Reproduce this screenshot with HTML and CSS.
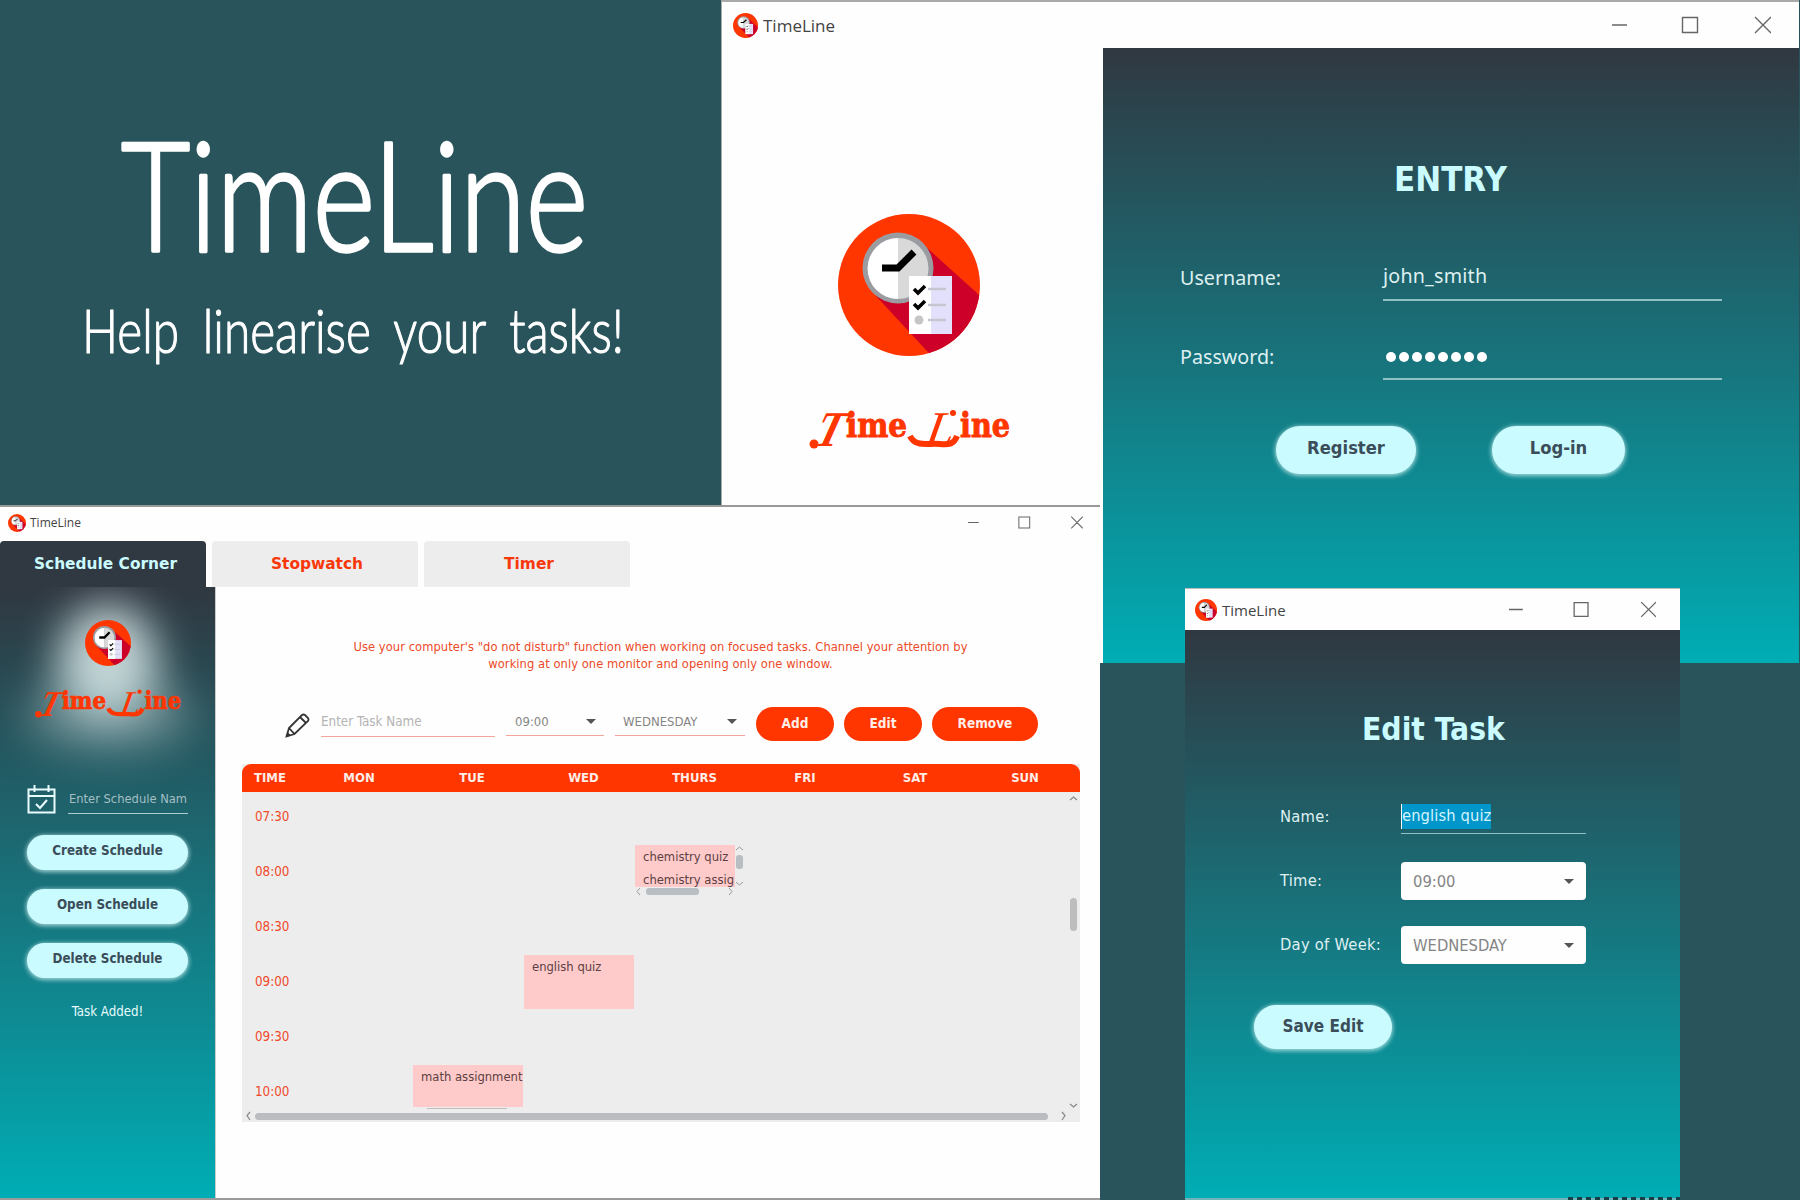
FILE: index.html
```html
<!DOCTYPE html>
<html lang="en">
<head>
<meta charset="utf-8">
<title>TimeLine</title>
<link rel="stylesheet" href="styles.css">
</head>
<body>
<svg class="defs" width="0" height="0" aria-hidden="true">
  <defs>
    <clipPath id="disc"><circle cx="71" cy="71" r="71"/></clipPath>
    <symbol id="logo" viewBox="0 0 142 142">
      <circle cx="71" cy="71" r="71" fill="#ff3600"/>
      <path clip-path="url(#disc)" d="M88 33 L150 89 V150 H101 L38 82 Z" fill="#cc0028"/>
      <circle cx="60" cy="54" r="35.500" fill="#9b9ca2"/>
      <path d="M60 24a30.500 30.500 0 0 0 0 61z" fill="#fff"/>
      <path d="M60 24a30.500 30.500 0 0 1 0 61z" fill="#d9d9da"/>
      <path d="M44 54H60L76 38" fill="none" stroke="#000" stroke-width="7"/>
      <path d="M71 62h43v58H71z" fill="#e2e0fa"/>
      <path d="M71 62h22v58H71z" fill="#fff"/>
      <path d="M76 75l4 4 7-7M76 90l4 4 7-7" fill="none" stroke="#000" stroke-width="3.500"/>
      <path d="M90 75h18M90 91h18M90 106h18" stroke="#c6c6d0" stroke-width="2.500"/>
      <circle cx="81" cy="106" r="4.500" fill="#c6c6c6"/>
    </symbol>
    <symbol id="controls" viewBox="0 0 160 18">
      <path d="M1 9H16M71.500 1.500H86.500V16.500H71.500zM144 1L160 17M160 1L144 17" fill="none" stroke="#666" stroke-width="1.400"/>
    </symbol>
    <symbol id="wordmark" viewBox="0 0 204 44">
      <g class="mark">
        <text class="swash-t" transform="translate(4 38) skewX(-24)" textLength="27" lengthAdjust="spacingAndGlyphs">T</text>
        <text class="lower" x="39" y="29" textLength="61" lengthAdjust="spacingAndGlyphs">ime</text>
        <text class="swash-l" transform="translate(117 38) skewX(-10)">L</text>
        <text class="lower" x="153" y="29" textLength="50" lengthAdjust="spacingAndGlyphs">ine</text>
        <path d="M103 28c5 11 17 7 30 8 9 1 14 0 17-8" fill="none" stroke="#ff3600" stroke-width="6"/>
        <circle cx="7" cy="36" r="4.500" fill="#ff3600"/>
        <circle cx="146" cy="5" r="3" fill="#ff3600"/>
      </g>
    </symbol>
  </defs>
</svg>

<header class="hero">
  <svg class="hero-title" viewBox="0 0 480 200"><text x="4" y="144" textLength="467" lengthAdjust="spacingAndGlyphs">TimeLine</text></svg>
  <svg class="hero-sub" viewBox="0 0 560 100"><text x="0" y="63" textLength="542" lengthAdjust="spacingAndGlyphs">Help linearise your tasks!</text></svg>
</header>

<section class="window entry">
  <div class="titlebar">
    <svg class="app-icon"><use href="#logo"/></svg><span class="app-name">TimeLine</span>
    <svg class="controls"><use href="#controls"/></svg>
  </div>
  <div class="entry-body">
    <div class="brand">
      <svg class="brand-logo"><use href="#logo"/></svg>
      <svg class="brand-word"><use href="#wordmark"/></svg>
    </div>
    <form class="entry-form">
      <h2>ENTRY</h2>
      <div class="field"><label>Username:</label><div class="line-input">john_smith</div></div>
      <div class="field"><label>Password:</label><div class="line-input dots"><i></i><i></i><i></i><i></i><i></i><i></i><i></i><i></i></div></div>
      <div class="entry-actions"><span class="pill">Register</span><span class="pill">Log-in</span></div>
    </form>
  </div>
</section>

<section class="window main">
  <div class="titlebar">
    <svg class="app-icon"><use href="#logo"/></svg><span class="app-name">TimeLine</span>
    <svg class="controls"><use href="#controls"/></svg>
  </div>
  <nav class="tabs"><span class="tab active">Schedule Corner</span><span class="tab">Stopwatch</span><span class="tab">Timer</span></nav>
  <div class="main-body">
    <aside class="sidebar">
      <div class="glow">
        <svg class="side-logo"><use href="#logo"/></svg>
        <svg class="side-word"><use href="#wordmark"/></svg>
      </div>
      <div class="schedule-name">
        <svg class="calendar" viewBox="0 0 29 29"><path d="M1.500 4.500H27.500V27.500H1.500zM1.500 11H27.500M7.500 0V7M21.500 0V7M9 19l4 4 7-8" fill="none" stroke="#e9fdff" stroke-width="2"/></svg>
        <span class="side-input">Enter Schedule Nam</span>
      </div>
      <span class="pill">Create Schedule</span>
      <span class="pill">Open Schedule</span>
      <span class="pill">Delete Schedule</span>
      <p class="status">Task Added!</p>
    </aside>
    <div class="content">
      <p class="tip"><span>Use your computer's "do not disturb" function when working on focused tasks. Channel your attention by</span><br><span>working at only one monitor and opening only one window.</span></p>
      <div class="toolbar">
        <svg class="pencil" viewBox="0 0 25 25"><path d="M1.500 23.500L4 15 17 2Q18.500 1 20 2L23 5Q24 6.500 23 8L9.500 21ZM4 15L9.500 21M15 4L21 10" fill="none" stroke="#333" stroke-width="1.800"/><path d="M1 24l1.500-5L6 22.500z" fill="#333"/></svg>
        <span class="task-input">Enter Task Name</span>
        <span class="combo time">09:00<i class="caret"></i></span>
        <span class="combo day">WEDNESDAY<i class="caret"></i></span>
        <span class="btn">Add</span><span class="btn">Edit</span><span class="btn wide">Remove</span>
      </div>
      <div class="table">
        <div class="thead"><span class="first">TIME</span><span>MON</span><span>TUE</span><span>WED</span><span>THURS</span><span>FRI</span><span>SAT</span><span>SUN</span></div>
        <div class="tbody">
          <div class="grid">
            <span class="hour r1">07:30</span><span class="hour r2">08:00</span><span class="hour r3">08:30</span><span class="hour r4">09:00</span><span class="hour r5">09:30</span><span class="hour r6">10:00</span>
            <div class="cell thu r2">
              <div class="task list"><span>chemistry quiz</span><span>chemistry assig</span></div>
              <svg class="mini-v" viewBox="0 0 9 42"><path d="M1 5l3.500-3L8 5M1 37l3.500 3L8 37" fill="none" stroke="#999"/><rect x="1" y="10" width="7" height="14" rx="3" fill="#b8bec2"/></svg>
              <svg class="mini-h" viewBox="0 0 99 9"><path d="M5 1L2 4.500 5 8M94 1l3 3.500L94 8" fill="none" stroke="#999"/><rect x="11" y="1" width="53" height="7" rx="3" fill="#b8bec2"/></svg>
            </div>
            <div class="cell wed r4"><div class="task">english quiz</div></div>
            <div class="cell tue r6"><div class="task short">math assignment</div><i class="peek"></i></div>
          </div>
          <svg class="scroll-v" viewBox="0 0 9 317"><path d="M1 8l3.500-3L8 8M1 312l3.500 3L8 312" fill="none" stroke="#888" stroke-width="1.200"/><rect x="1" y="106" width="7" height="33" rx="3.500" fill="#bdbdbd"/></svg>
        </div>
        <svg class="scroll-h" viewBox="0 0 838 13"><path d="M8 3L5 6.500 8 11M820 3l3 3.500L820 11" fill="none" stroke="#888" stroke-width="1.200"/><rect x="13" y="4" width="793" height="7" rx="3.500" fill="#bbbcbf"/></svg>
      </div>
    </div>
  </div>
</section>

<section class="window edit">
  <div class="titlebar">
    <svg class="app-icon"><use href="#logo"/></svg><span class="app-name">TimeLine</span>
    <svg class="controls"><use href="#controls"/></svg>
  </div>
  <form class="edit-form">
    <h2>Edit Task</h2>
    <div class="field"><label>Name:</label><div class="line-input"><span class="selected">english quiz</span></div></div>
    <div class="field"><label>Time:</label><div class="select">09:00<i class="caret"></i></div></div>
    <div class="field"><label>Day of Week:</label><div class="select">WEDNESDAY<i class="caret"></i></div></div>
    <span class="pill">Save Edit</span>
    <i class="specks"></i>
  </form>
</section>
</body>
</html>
```
FILE: styles.css
```css
* { box-sizing: border-box; }
body {
  margin: 0; width: 1800px; height: 1200px; overflow: hidden; position: relative;
  background: #29545c;
  font-family: "DejaVu Sans Condensed", "DejaVu Sans", sans-serif;
  font-stretch: condensed;
}
.defs { position: absolute; }
svg { display: block; flex: none; }
h2, p, form { margin: 0; }
span { white-space: nowrap; }

.hero { width: 720px; height: 506px; padding-top: 107px; }
.hero svg { overflow: visible; }
.hero text { fill: #fff; stroke: #fff; stroke-linejoin: round; font-family: Lato, sans-serif; font-weight: 300; }
.hero-title { width: 480px; height: 200px; margin-left: 117px; }
.hero-title text { font-size: 152px; stroke-width: 3.500px; }
.hero-sub { width: 560px; height: 100px; margin: -17px 0 0 82px; }
.hero-sub text { font-size: 62px; word-spacing: 14px; stroke-width: 1.200px; }

.mark { fill: #ff3600; font-weight: bold; }
.lower { font: bold 33px "DejaVu Serif", serif; stroke: #ff3600; stroke-width: 1px; }
.swash-t { font: bold 50px "Liberation Serif", serif; }
.swash-l { font: italic 50px "Liberation Serif", serif; }

.window { position: absolute; display: flex; flex-direction: column; background: #fefefe; }
.titlebar { display: flex; align-items: center; flex: none; }
.app-name { font-family: "Open Sans", sans-serif; font-stretch: normal; color: #444; flex: 1; }
.pill {
  display: flex; align-items: center; justify-content: center; border-radius: 30px;
  background: #cafbff; color: #3a4d59; font-weight: bold;
  box-shadow: 0 1px 4px 1px rgba(205, 240, 240, .75);
}
.caret { border: 5px solid transparent; border-top-color: #555; border-bottom: 0; margin-left: auto; }

.entry { left: 721px; top: 0; width: 1078px; height: 663px; border-top: 2px solid #a9a9a9; border-left: 1px solid #aaa; }
.entry .titlebar { height: 46px; padding: 0 28px 0 11px; }
.entry .app-icon { width: 25px; height: 25px; }
.entry .app-name { font-size: 17px; margin-left: 5px; }
.entry .controls { width: 160px; height: 18px; }
.entry-body { display: flex; flex: 1; }
.brand { width: 381px; padding: 166px 0 0 116px; }
.brand-logo { width: 142px; height: 142px; }
.brand-word { width: 204px; height: 44px; margin: 52px 0 0 -31px; }
.entry-form { flex: 1; background: linear-gradient(#303841, #00adb5); padding: 110px 0 0 77px; }
.entry h2, .edit h2 { color: #cafbff; font-weight: bold; }
.entry h2 { font-size: 34.500px; line-height: 42px; padding-left: 214px; }
.field { display: flex; }
.entry .field { height: 60px; margin-top: 42px; font: 19.700px "Noto Sans", sans-serif; color: #dff0f1; }
.entry .field + .field { margin-top: 19px; }
.entry label { width: 203px; line-height: 72px; }
.entry .line-input { width: 339px; height: 59px; line-height: 68px; border-bottom: 2px solid #8fc0c3; letter-spacing: .2px; }
.entry .dots { display: flex; gap: 3px; padding: 31px 0 0 3px; }
.dots i { width: 10px; height: 10px; border-radius: 50%; background: #fff; }
.entry-actions { display: flex; gap: 76px; margin: 45px 0 0 96px; }
.entry .pill { width: 140px; height: 48px; font-size: 18.200px; padding-bottom: 5px; }
.entry .pill + .pill { width: 133px; }

.main { left: 0; top: 505px; width: 1100px; height: 695px; border-top: 2px solid #999; border-bottom: 2px solid #9a9a9a; }
.main .titlebar { height: 34px; padding: 0 17px 3px 8px; }
.main .app-icon { width: 18px; height: 18px; }
.main .app-name { font-size: 12px; margin-left: 4px; }
.main .controls { width: 116px; height: 13px; }
.tabs { display: flex; gap: 6px; height: 46px; flex: none; }
.tab {
  width: 206px; display: flex; align-items: center; justify-content: center;
  background: #ededed; color: #f8380b; border-radius: 4px 4px 0 0; padding-left: 4px;
  font: bold 15.400px "DejaVu Sans", sans-serif;
}
.tab.active { background: #303841; color: #cafbff; padding-left: 5px; }
.main-body { display: flex; flex: 1; }
.sidebar { width: 215px; background: linear-gradient(#303841, #00adb5); padding: 33px 27px 0; overflow: hidden; }
.glow { height: 165px; position: relative; z-index: 0; }
.glow::before, .glow::after { content: ""; position: absolute; z-index: -1; border-radius: 50%; }
.glow::before { left: 31px; top: -16px; width: 100px; height: 114px; background: rgba(235, 250, 250, .78); filter: blur(20px); }
.glow::after { left: -2px; top: 56px; width: 168px; height: 76px; background: rgba(200, 220, 220, .4); filter: blur(22px); }
.side-logo { width: 46px; height: 46px; margin-left: 58px; }
.side-word { width: 149px; height: 32px; margin: 22px 0 0 6px; }
.schedule-name { display: flex; gap: 12px; height: 29px; margin-bottom: 21px; }
.calendar { width: 29px; height: 29px; }
.side-input { width: 120px; height: 29px; line-height: 27px; padding-left: 1px; font-size: 12.800px; color: #a3bfc4; border-bottom: 1px solid #b0cccf; overflow: hidden; }
.sidebar .pill { height: 35px; margin-bottom: 19px; font-size: 13.300px; padding-bottom: 4px; }
.status { text-align: center; color: #e5fbfc; font-size: 13.200px; line-height: 18px; padding-top: 6px; }
.content { flex: 1; padding: 51px 19px 0 26px; border-left: 1px solid #ccc; }
.tip { color: #ec4a28; font-size: 12.800px; letter-spacing: .06px; line-height: 17.300px; text-align: center; height: 69px; padding-right: 2px; }
.toolbar { display: flex; height: 57px; color: #858585; font-size: 13px; }
.pencil { width: 25px; height: 25px; margin: 6px 11px 0 43px; }
.task-input { width: 174px; height: 30px; line-height: 30px; border-bottom: 1px solid #f3a59a; color: #b4b4b4; margin-right: 11px; font-size: 13.300px; }
.combo { display: flex; align-items: center; height: 29px; border-bottom: 1px solid #f3a59a; padding: 0 8px 0 9px; }
.combo.time { width: 98px; margin-right: 11px; }
.combo.day { width: 130px; margin-right: 11px; padding-left: 8px; }
.btn { width: 78px; height: 34px; border-radius: 17px; background: #ff3600; color: #ffede7; font-weight: bold; font-size: 13.500px; display: flex; align-items: center; justify-content: center; margin-right: 10px; padding-bottom: 2px; }
.btn.wide { width: 106px; margin: 0; }
.table { width: 838px; height: 358px; background: #ededed; }
.thead { display: grid; grid-template-columns: 60px 114px 112px 111px 111px 110px 110px 110px; height: 28px; align-items: center; text-align: center; background: #ff3600; color: #ffede7; font-weight: bold; font-size: 13px; border-radius: 9px 9px 0 0; padding-bottom: 1px; }
.thead .first { text-align: left; padding-left: 12px; }
.tbody { display: flex; height: 317px; }
.grid { display: grid; width: 827px; grid-template-columns: 60px repeat(6, 111px) 101px; grid-template-rows: 53px repeat(5, 55px); flex: none; overflow: hidden; }
.hour { grid-column: 1; color: #f0492a; font-size: 13.300px; line-height: 54px; padding-left: 13px; }
.r1 { grid-row: 1; line-height: 50px; } .r2 { grid-row: 2; } .r3 { grid-row: 3; } .r4 { grid-row: 4; } .r5 { grid-row: 5; } .r6 { grid-row: 6; }
.tue { grid-column: 3; } .wed { grid-column: 4; } .thu { grid-column: 5; }
.cell { display: grid; grid-template-columns: 100px 11px; align-content: start; }
.task { grid-column: 1 / 3; height: 54px; margin-right: 1px; background: #ffcaca; color: #5b4143; font-size: 12.900px; line-height: 24px; padding-left: 8px; white-space: nowrap; }
.task.short { height: 42px; }
.task.list { grid-column: 1; height: 42px; margin: 0; padding-left: 8px; overflow: hidden; display: flex; flex-direction: column; }
.task.list span { height: 23px; flex: none; }
.peek { width: 80px; height: 1px; margin: 1px 0 0 14px; background: #c4bcbc; }
.mini-v { width: 9px; height: 42px; }
.mini-h { width: 99px; height: 9px; }
.scroll-v { width: 9px; height: 317px; }
.scroll-h { width: 838px; height: 13px; }

.edit { left: 1185px; top: 588px; width: 495px; height: 612px; border-top: 1px solid #bbb; }
.edit .titlebar { height: 41px; padding: 0 24px 0 10px; }
.edit .app-icon { width: 22px; height: 22px; }
.edit .app-name { font-size: 15px; margin-left: 5px; }
.edit .controls { width: 148px; height: 17px; }
.edit-form { flex: 1; background: linear-gradient(#303841, #00adb5); padding: 79px 0 0 95px; position: relative; border-bottom: 2px solid #6fb4ba; }
.edit h2 { font-size: 31.500px; line-height: 40px; padding-left: 82px; margin-bottom: 49px; }
.edit .field { height: 38px; margin-bottom: 26px; font-size: 16.400px; color: #dff0f1; }
.edit label { width: 121px; line-height: 38px; white-space: nowrap; letter-spacing: .25px; }
.edit .line-input { width: 185px; height: 36px; border-bottom: 1px solid #8fc0c3; padding-top: 6px; }
.selected { display: inline-block; height: 25px; line-height: 23px; background: #0096c9; border-left: 1px solid #fff; color: #d5f3ff; letter-spacing: .1px; }
.select { width: 185px; height: 38px; background: #fefefe; border-radius: 4px; display: flex; align-items: center; padding: 0 12px; color: #858585; }
.edit .pill { width: 138px; height: 44px; font-size: 17px; margin: 41px 0 0 -26px; padding-bottom: 3px; }
.specks { position: absolute; right: 0; bottom: -2px; width: 112px; height: 3px; background: repeating-linear-gradient(90deg, #163e46 0 5px, transparent 5px 9px); }
```
